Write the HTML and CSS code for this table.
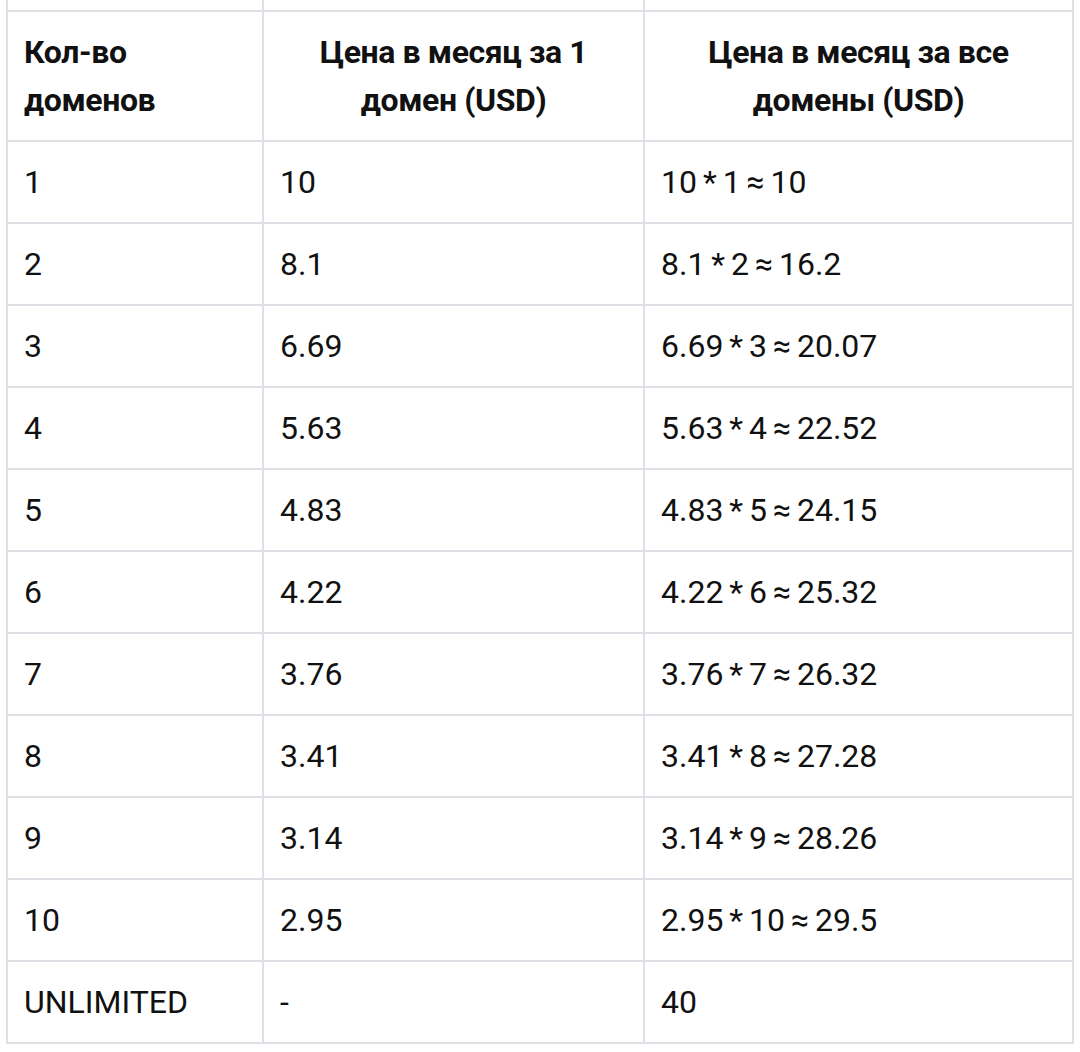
FILE: index.html
```html
<!DOCTYPE html>
<html lang="ru">
<head>
<meta charset="utf-8">
<title>Цены</title>
<link rel="stylesheet" href="styles.css">
</head>
<body>
<table class="prices">
  <colgroup>
    <col class="c1">
    <col class="c2">
    <col class="c3">
  </colgroup>
  <thead>
    <tr class="spacer"><td></td><td></td><td></td></tr>
    <tr class="head">
      <th class="left">Кол-во доменов</th>
      <th>Цена в месяц за 1 домен (USD)</th>
      <th>Цена в месяц за все домены (USD)</th>
    </tr>
  </thead>
  <tbody>
    <tr><td>1</td><td>10</td><td>10 * 1 ≈ 10</td></tr>
    <tr><td>2</td><td>8.1</td><td>8.1 * 2 ≈ 16.2</td></tr>
    <tr><td>3</td><td>6.69</td><td>6.69 * 3 ≈ 20.07</td></tr>
    <tr><td>4</td><td>5.63</td><td>5.63 * 4 ≈ 22.52</td></tr>
    <tr><td>5</td><td>4.83</td><td>4.83 * 5 ≈ 24.15</td></tr>
    <tr><td>6</td><td>4.22</td><td>4.22 * 6 ≈ 25.32</td></tr>
    <tr><td>7</td><td>3.76</td><td>3.76 * 7 ≈ 26.32</td></tr>
    <tr><td>8</td><td>3.41</td><td>3.41 * 8 ≈ 27.28</td></tr>
    <tr><td>9</td><td>3.14</td><td>3.14 * 9 ≈ 28.26</td></tr>
    <tr><td>10</td><td>2.95</td><td>2.95 * 10 ≈ 29.5</td></tr>
    <tr><td>UNLIMITED</td><td>-</td><td>40</td></tr>
  </tbody>
</table>
</body>
</html>
```
FILE: styles.css
```css
html, body {
  margin: 0;
  padding: 0;
  background: #ffffff;
}

body {
  font-family: Roboto, "Noto Sans", sans-serif;
  color: #111111;
}

.prices {
  margin-left: 6px;
  width: 1068px;
  table-layout: fixed;
  border-collapse: separate;
  border-spacing: 0;
  font-size: 32px;
  line-height: 48px;
}

.c1 { width: 258px; }
.c2 { width: 381px; }
.c3 { width: 429px; }

.prices td,
.prices th {
  padding: 16px;
  border-right: 2px solid #dde0e4;
  border-bottom: 2px solid #dde0e4;
  text-align: left;
  vertical-align: middle;
}

.prices td {
  word-spacing: -2px;
}

.prices td:first-child,
.prices th:first-child {
  border-left: 2px solid #dde0e4;
}

.prices th {
  font-weight: 700;
  text-align: center;
  letter-spacing: -0.4px;
}

.prices th.left {
  text-align: left;
}

.prices .spacer td {
  padding: 0;
  height: 10px;
}
```
